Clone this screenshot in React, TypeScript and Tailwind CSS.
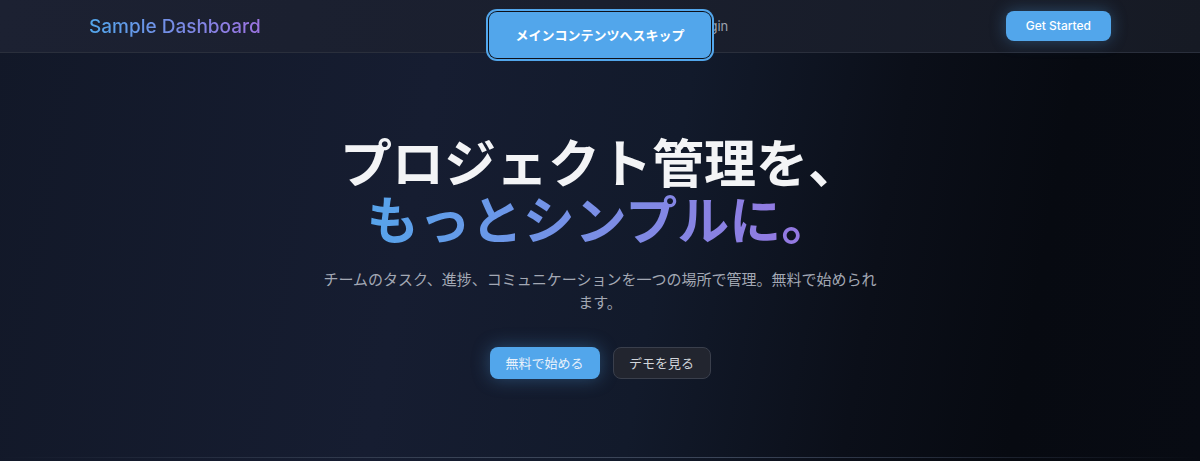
import React from "react";

const latin = { fontFamily: '"Inter", "Noto Sans CJK JP", sans-serif' };
const jp = { fontFamily: '"Noto Sans CJK JP", "Inter", sans-serif' };

export default function App() {
  return (
    <div className="relative min-h-[461px] w-full overflow-hidden bg-[linear-gradient(100deg,#121828_0%,#161d31_35%,#121a2b_55%,#0b0f19_72%,#070a11_85%,#080b13_100%)]" style={latin}>
      {/* Skip link (focused) */}
      <a
        href="#main"
        className="absolute left-1/2 top-[12px] z-50 flex h-[46px] w-[222px] -translate-x-1/2 items-center justify-center rounded-lg bg-[#52a6eb] text-[13px] font-bold text-white ring-2 ring-[#52a6eb] ring-offset-1 ring-offset-[#0d1018]"
        style={jp}
      >
        メインコンテンツへスキップ
      </a>

      {/* Header */}
      <header className="h-[53px] border-b border-[#2a2f3c] bg-[linear-gradient(100deg,#1c2132_0%,#1a1f2e_50%,#161a24_100%)]">
        <div className="mx-auto flex h-full max-w-[1022px] items-center justify-between">
          <span className="bg-[linear-gradient(90deg,#52a6eb,#9b72e0)] bg-clip-text pt-[2px] text-[19px] font-medium text-transparent">
            Sample Dashboard
          </span>
          <nav className="flex items-center gap-7 pl-[4px] pt-[2px] text-[13px] text-[#9ca3af]">
            <a>Features</a>
            <a>Pricing</a>
            <a>Login</a>
          </nav>
          <button className="h-[30px] rounded-lg bg-[#52a6eb] px-[20px] text-[12px] font-medium text-white shadow-[0_0_16px_rgba(82,166,235,0.35)]">
            Get Started
          </button>
        </div>
      </header>

      {/* Hero */}
      <main id="main" className="flex flex-col items-center pt-[79px]" style={jp}>
        <h1 className="text-center text-[52px] font-bold leading-[57px] text-[#f3f4f6]">
          <span className="block">プロジェクト管理を、</span>
          <span className="block bg-[linear-gradient(90deg,#52a6eb_0%,#7b8ee6_50%,#9b72e0_100%)] bg-clip-text text-transparent">
            もっとシンプルに。
          </span>
        </h1>
        <p className="mt-[22px] max-w-[560px] text-center text-[15px] leading-[22.5px] text-[#a3a8b4]">
          チームのタスク、進捗、コミュニケーションを一つの場所で管理。無料で始められます。
        </p>
        <div className="mt-[34px] flex gap-[13px]">
          <button className="h-[32px] w-[110px] rounded-lg bg-[#52a6eb] text-[13px] text-[#e8f1fb] shadow-[0_0_18px_rgba(82,166,235,0.35)]">
            無料で始める
          </button>
          <button className="h-[32px] w-[98px] rounded-lg border border-[#3a3f4c] bg-[#22252f] text-[13px] text-[#d1d5db]">
            デモを見る
          </button>
        </div>
      </main>

      <div className="absolute bottom-[3px] left-0 right-0 h-px bg-[linear-gradient(90deg,transparent,#3b4558_40%,#3b4558_60%,transparent)]" />
    </div>
  );
}
